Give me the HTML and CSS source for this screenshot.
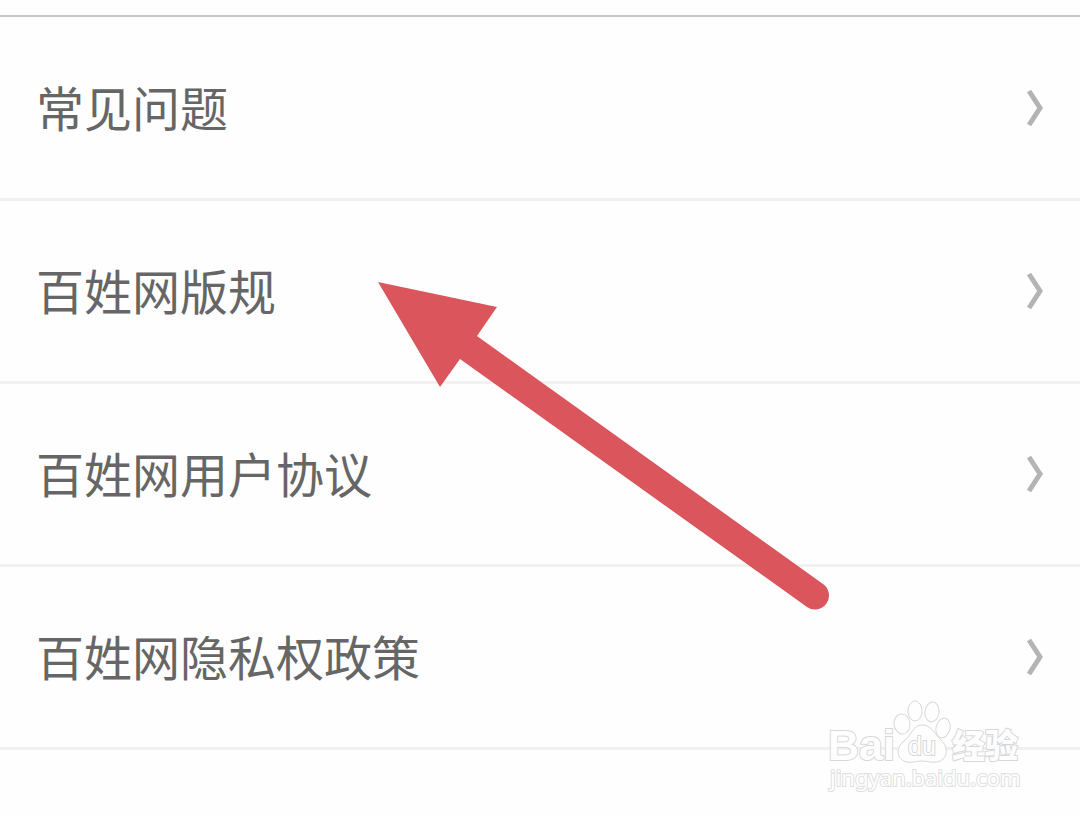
FILE: index.html
```
<!DOCTYPE html>
<html lang="zh-CN">

<head>
    <meta charset="UTF-8">
    <meta name="viewport" content="width=device-width, initial-scale=1.0">
    <title>百姓网</title>
    <link rel="stylesheet" href="styles.css">
</head>

<body>
    <div class="page">
        <ul class="menu">
            <li>
                <a href="#">
                    <span>常见问题</span>
                    <svg class="arrow" viewBox="0 0 20 40"><path d="M4 3 L15 20 L4 37" /></svg>
                </a>
            </li>
            <li>
                <a href="#">
                    <span>百姓网版规</span>
                    <svg class="arrow" viewBox="0 0 20 40"><path d="M4 3 L15 20 L4 37" /></svg>
                </a>
            </li>
            <li>
                <a href="#">
                    <span>百姓网用户协议</span>
                    <svg class="arrow" viewBox="0 0 20 40"><path d="M4 3 L15 20 L4 37" /></svg>
                </a>
            </li>
            <li>
                <a href="#">
                    <span>百姓网隐私权政策</span>
                    <svg class="arrow" viewBox="0 0 20 40"><path d="M4 3 L15 20 L4 37" /></svg>
                </a>
            </li>
        </ul>

        <!-- 红色指示箭头 -->
        <svg class="pointer" viewBox="0 0 452 328">
            <path d="M0 0 L119 25 L99 54 L445 302 A14 14 0 0 1 429 325 L82 77 L62 105 Z" />
        </svg>

        <!-- 水印 -->
        <svg class="mark" viewBox="0 0 200 100">
            <text class="logo" x="4" y="60">Bai</text>
            <ellipse cx="78" cy="24" rx="8" ry="10" transform="rotate(-6 78 24)" />
            <ellipse cx="91" cy="11" rx="7" ry="10" />
            <ellipse cx="108" cy="12" rx="7" ry="10" transform="rotate(8 108 12)" />
            <ellipse cx="119" cy="28" rx="7" ry="10" transform="rotate(14 119 28)" />
            <path d="M98 25 C107 25 110 33 117 40 C125 47 124 60 113 62 C107 63 103 61 98 61 C93 61 89 63 83 62 C72 60 72 48 79 42 C88 35 89 25 98 25 Z" />
            <text class="du" x="98" y="55">du</text>
            <text class="cn" x="128" y="58">经验</text>
            <text class="site" x="6" y="86">jingyan.baidu.com</text>
        </svg>
    </div>
</body>

</html>
```
FILE: styles.css
```
* {
    padding: 0;
    margin: 0;
    list-style: none;
    box-sizing: border-box;
}

body {
    background: #fefefe;
    font-family: "Liberation Sans", "Noto Sans CJK SC", sans-serif;
}

.page {
    position: relative;
    min-height: 100vh;
    padding-top: 15px;
}

.menu {
    border-top: 2px solid #c8c8c8;
    padding-top: 1px;
}

.menu li {
    border-bottom: 3px solid #f1f1f1;
}

.menu a {
    display: flex;
    align-items: center;
    justify-content: space-between;
    height: 180px;
    padding: 0 35px 0 36px;
    font-size: 48px;
    color: #666;
    text-decoration: none;
}

.menu span {
    padding-bottom: 4px;
}

.arrow {
    width: 20px;
    height: 40px;
    fill: none;
    stroke: #b4b4b4;
    stroke-width: 5;
}

/* 箭头浮在列表之上 */
.pointer {
    position: absolute;
    left: 378px;
    top: 282px;
    width: 452px;
    height: 328px;
    fill: #db565c;
}

.mark {
    position: absolute;
    right: 56px;
    top: 700px;
    width: 200px;
    height: 100px;
    overflow: visible;
    fill: #fefefe;
    stroke: #d8d8d8;
    stroke-width: 1;
}

.mark text {
    stroke-width: 2;
    paint-order: stroke;
}

.mark .logo {
    font-size: 43px;
    font-weight: bold;
}

.mark .du {
    font-size: 25px;
    text-anchor: middle;
}

.mark .cn {
    font-size: 33px;
    font-weight: 900;
}

.mark .site {
    font-family: "Noto Sans", sans-serif;
    font-size: 22px;
    stroke: #e0e0e0;
}
```
